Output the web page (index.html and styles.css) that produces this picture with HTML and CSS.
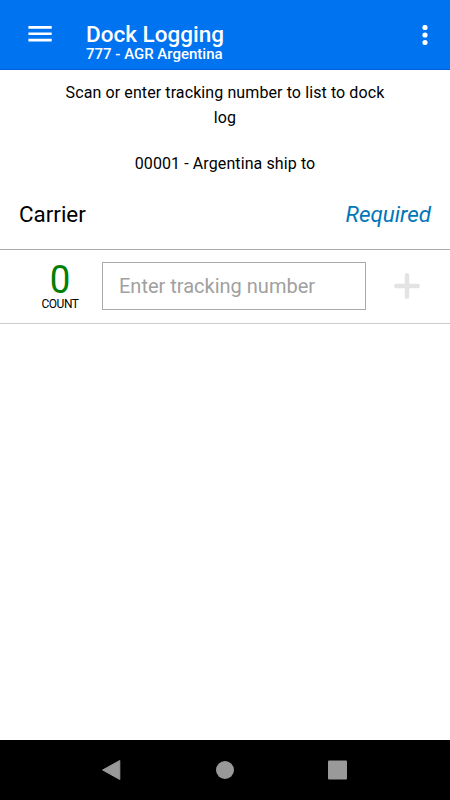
FILE: index.html
```html
<!DOCTYPE html>
<html lang="en">
<head>
<meta charset="utf-8">
<title>Dock Logging</title>
<link rel="stylesheet" href="styles.css">
</head>
<body>
<header class="bar">
  <svg class="menu" viewBox="0 0 24 16"><path d="M.4 0h23.3v2.8H.4zM.4 6.4h23.3v2.6H.4zM.4 12.8h23.3v2.6H.4z"/></svg>
  <div class="titles">
    <h1>Dock Logging</h1>
    <p>777 - AGR Argentina</p>
  </div>
  <svg class="more" viewBox="0 0 6 20"><circle cx="3" cy="2.5" r="2.6"/><circle cx="3" cy="10" r="2.6"/><circle cx="3" cy="17.5" r="2.6"/></svg>
</header>
<main>
  <p class="hint">Scan or enter tracking number to list to dock log</p>
  <p class="ship">00001 - Argentina ship to</p>
  <div class="carrier"><span>Carrier</span><em>Required</em></div>
  <div class="entry">
    <div class="count"><strong>0</strong><span>COUNT</span></div>
    <input type="text" placeholder="Enter tracking number">
    <svg class="plus" viewBox="0 0 26 26"><path d="M13 2.3v21.4M2.3 13h21.4"/></svg>
  </div>
</main>
<nav class="nav">
  <svg viewBox="0 0 20 22"><path d="M17.8 1.5v19L.6 11z" stroke="#999" stroke-linejoin="round"/></svg>
  <svg viewBox="0 0 20 22"><circle cx="10" cy="11" r="9"/></svg>
  <svg viewBox="0 0 20 22"><rect x="0" y="1.5" width="19" height="19" rx="1"/></svg>
</nav>
</body>
</html>
```
FILE: styles.css
```css
* { box-sizing: border-box; }
body { margin: 0; height: 800px; display: flex; flex-direction: column; font-family: Roboto, sans-serif; color: #000; background: #fff; overflow: hidden; }
h1, p { margin: 0; }
.bar { height: 70px; background: #0073f0; border-bottom: 1px solid #005fdc; color: #fff; display: flex; align-items: center; padding: 0 22px 0 28px; }
.menu { width: 24px; height: 16px; fill: #fff; margin-bottom: 1px; }
.titles { flex: 1; margin-left: 34px; height: 70px; padding-top: 21px; }
.titles h1 { font-size: 22.5px; line-height: 26px; font-weight: 500; }
.titles p { font-size: 15px; line-height: 14px; font-weight: 500; }
.more { width: 6px; height: 20px; fill: #fff; }
main { flex: 1; }
.hint { width: 335px; margin: 10px auto 0; text-align: center; font-size: 16px; line-height: 25px; letter-spacing: .1px; }
.ship { margin-top: 21px; text-align: center; font-size: 16px; line-height: 25px; letter-spacing: .1px; }
.carrier { height: 74px; display: flex; justify-content: space-between; align-items: center; padding: 3px 19px 0; font-size: 22.4px; border-bottom: 1px solid #aaa; }
.carrier em { color: #0076b8; }
.entry { height: 74px; display: flex; align-items: center; padding-bottom: 1px; border-bottom: 1px solid #ccc; }
.count { width: 60px; margin-left: 30px; display: flex; flex-direction: column; align-items: center; padding-bottom: 2px; }
.count strong { font-size: 39px; line-height: 38px; font-weight: 400; color: #008000; transform: scaleX(.94); }
.count span { font-size: 12px; line-height: 11px; letter-spacing: -.45px; }
input { width: 264px; height: 48px; margin-left: 12px; border: 1px solid #aaa; padding: 0 16px; font: 20px Roboto, sans-serif; background: #fff; }
input::placeholder { color: #a0a0a0; }
.plus { width: 26px; height: 26px; margin-left: 28px; stroke: #e3e3e3; stroke-width: 4.4; stroke-linecap: round; fill: none; }
.nav { height: 60px; background: #000; display: flex; justify-content: center; align-items: center; gap: 93px; fill: #999; }
.nav svg { width: 20px; height: 22px; }
```
